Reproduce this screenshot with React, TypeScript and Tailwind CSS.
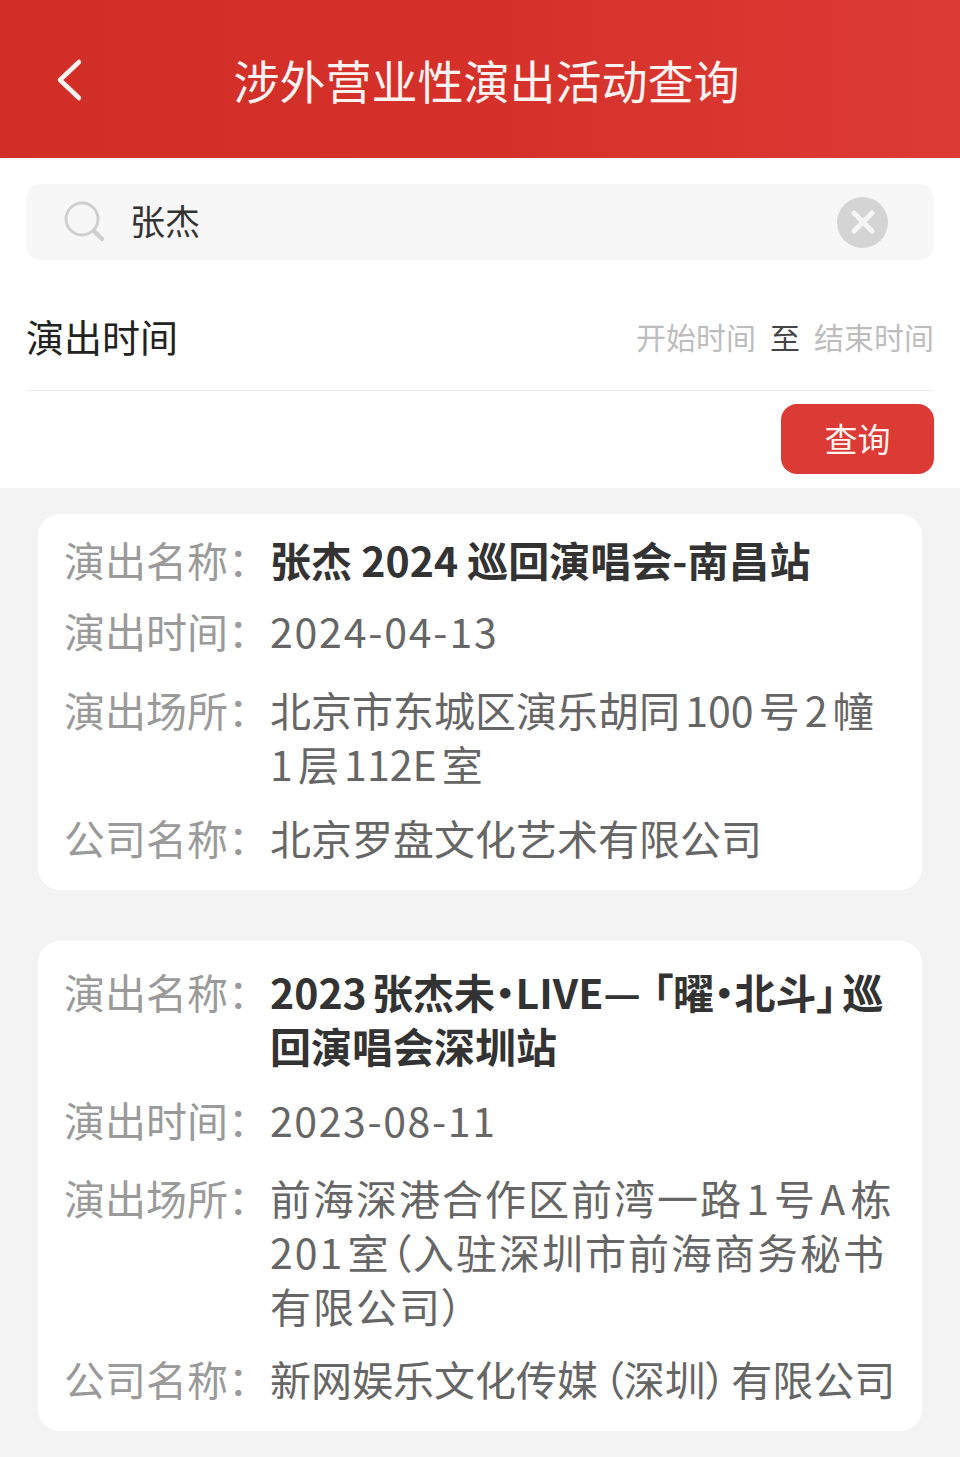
import React from 'react';

const FONT = "font-['Noto_Sans_CJK_SC','Noto_Sans',sans-serif]";

const Row: React.FC<{ label: string; className?: string; valueClass?: string; children: React.ReactNode }> = ({ label, className, valueClass, children }) => (
  <div className={`flex text-[41px] leading-[54px] ${className ?? ''}`}>
    <div className="w-[206px] shrink-0 whitespace-nowrap text-[#9a9a9a]">{label}：</div>
    <div className={`flex-1 whitespace-nowrap text-[#666666] [font-feature-settings:'palt'] ${valueClass ?? ''}`}>{children}</div>
  </div>
);

export default function App() {
  return (
    <div className={`w-[960px] h-[1457px] overflow-hidden bg-[#f3f3f3] ${FONT}`}>
      {/* 顶部标题栏 */}
      <div className="relative h-[158px] bg-gradient-to-r from-[#d02e27] via-[#d5312a] to-[#dc3a35] flex items-center justify-center">
        <svg className="absolute left-[54px] top-[58px]" width="30" height="44" viewBox="0 0 30 44" fill="none">
          <path d="M25 4 L6 22 L25 40" stroke="#fdf3f2" strokeWidth="4.5" strokeLinecap="round" strokeLinejoin="round" />
        </svg>
        <h1 className="ml-[13px] text-[46px] font-normal leading-none text-[#fdf3f2] whitespace-nowrap">涉外营业性演出活动查询</h1>
      </div>

      {/* 搜索区 */}
      <div className="bg-white h-[330px] px-[26px] pt-[26px]">
        <div className="h-[76px] rounded-[14px] bg-[#f7f7f7] flex items-center pl-[38px] pr-[46px]">
          <svg width="42" height="42" viewBox="0 0 42 42" fill="none">
            <circle cx="18" cy="18" r="16" stroke="#cfcfcf" strokeWidth="3" />
            <path d="M31 31 L38 38" stroke="#cfcfcf" strokeWidth="4.5" strokeLinecap="round" />
          </svg>
          <span className="ml-[24px] pb-[6px] text-[35px] leading-none text-[#333333]">张杰</span>
          <div className="ml-auto w-[51px] h-[51px] rounded-full bg-[#d4d4d4] flex items-center justify-center">
            <svg width="26" height="26" viewBox="0 0 26 26" fill="none">
              <path d="M4 4 L22 22 M22 4 L4 22" stroke="#f5f5f5" strokeWidth="5" strokeLinecap="round" />
            </svg>
          </div>
        </div>

        <div className="h-[131px] border-b border-[#ececec] flex items-center justify-between pt-[22px]">
          <span className="text-[38px] leading-none text-[#222222]">演出时间</span>
          <div className="flex items-center text-[30px] leading-none">
            <span className="text-[#bdbdbd]">开始时间</span>
            <span className="mx-[14px] text-[#444444]">至</span>
            <span className="text-[#bdbdbd]">结束时间</span>
          </div>
        </div>

        <div className="flex justify-end pt-[13px]">
          <button className="w-[153px] h-[70px] pb-[2px] rounded-[16px] bg-[#db3a35] text-[33px] leading-none text-[#fdf3f2]">查询</button>
        </div>
      </div>

      {/* 结果列表 */}
      <div className="px-[38px] pt-[26px] flex flex-col gap-[51px]">
        <div className="bg-white rounded-[22px] pl-[26px] pr-[20px] pt-[18px] pb-[26px]">
          <Row label="演出名称" className="mb-[17px]">
            <span className="font-bold text-[#333333]">张杰 2024 巡回演唱会-南昌站</span>
          </Row>
          <Row label="演出时间" className="mb-[25px]" valueClass="tracking-[1.8px]">2024-04-13</Row>
          <Row label="演出场所" className="mb-[20px]" valueClass="[word-spacing:-4px]">北京市东城区演乐胡同 100 号 2 幢<br />1 层 112E 室</Row>
          <Row label="公司名称">北京罗盘文化艺术有限公司</Row>
        </div>

        <div className="bg-white rounded-[22px] pl-[26px] pr-[20px] pt-[23px] pb-[26px]">
          <Row label="演出名称" className="mb-[20px]" valueClass="[word-spacing:-4px]">
            <span className="font-bold text-[#333333]">2023 张杰未·LIVE—<span className="ml-[12px]">「曜·北斗」</span> 巡<br />回演唱会深圳站</span>
          </Row>
          <Row label="演出时间" className="mb-[24px]" valueClass="tracking-[1.6px]">2023-08-11</Row>
          <Row label="演出场所" className="mb-[19px]" valueClass="tracking-[2px] [word-spacing:-8px]">前海深港合作区前湾一路 1 号 A 栋<br />201 室（入驻深圳市前海商务秘书<br />有限公司）</Row>
          <Row label="公司名称" valueClass="[word-spacing:-4px]">新网娱乐文化传媒 （深圳） 有限公司</Row>
        </div>
      </div>
    </div>
  );
}
